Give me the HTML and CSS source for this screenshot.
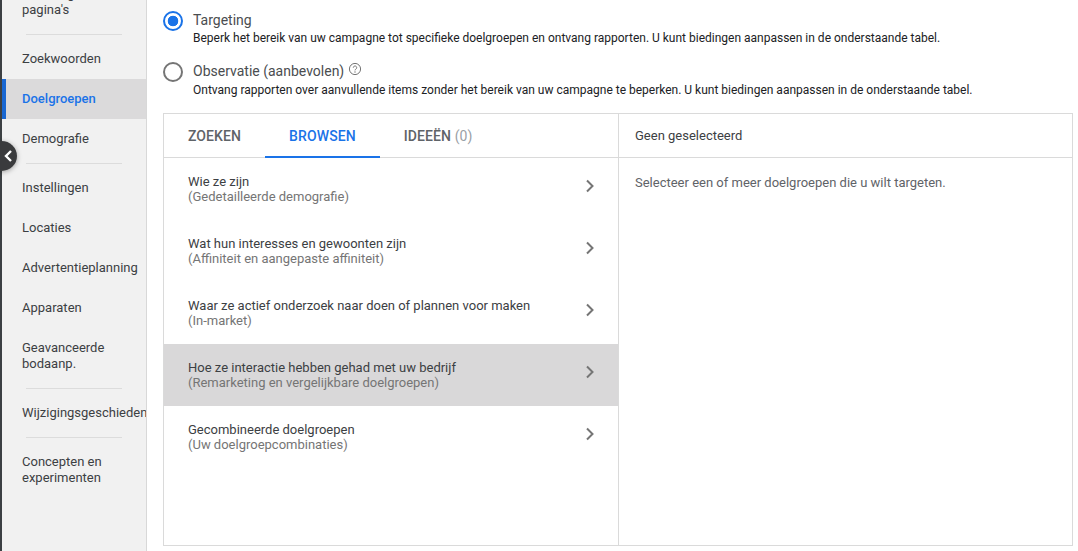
FILE: index.html
```html
<!DOCTYPE html>
<html lang="nl">
<head>
  <title>Doelgroepen</title>
  <meta charset="UTF-8">
  <meta name="viewport" content="width=device-width, initial-scale=1">
  <link rel="stylesheet" href="styles.css">
</head>
<body>
  <nav class="sidebar">
    <a class="nav-item nav-first">Instellingen voor<br>pagina's</a>
    <hr class="nav-line">
    <a class="nav-item">Zoekwoorden</a>
    <a class="nav-item active">Doelgroepen</a>
    <a class="nav-item">Demografie</a>
    <hr class="nav-line">
    <a class="nav-item">Instellingen</a>
    <a class="nav-item">Locaties</a>
    <a class="nav-item">Advertentieplanning</a>
    <a class="nav-item">Apparaten</a>
    <a class="nav-item">Geavanceerde<br>bodaanp.</a>
    <hr class="nav-line">
    <a class="nav-item">Wijzigingsgeschiedenis</a>
    <hr class="nav-line">
    <a class="nav-item">Concepten en<br>experimenten</a>
  </nav>

  <button class="collapse" aria-label="Inklappen">
    <svg width="10" height="14" viewBox="0 0 10 14"><path d="M8 2 L3 7 L8 12" fill="none" stroke="#fff" stroke-width="2.4"/></svg>
  </button>

  <main class="content">
    <div class="option">
      <span class="radio checked"></span>
      <div>
        <div class="option-title">Targeting</div>
        <div class="option-desc">Beperk het bereik van uw campagne tot specifieke doelgroepen en ontvang rapporten. U kunt biedingen aanpassen in de onderstaande tabel.</div>
      </div>
    </div>
    <div class="option option-second">
      <span class="radio"></span>
      <div>
        <div class="option-title">Observatie (aanbevolen)
          <svg class="help" width="14" height="14" viewBox="0 0 14 14"><circle cx="7" cy="7" r="5.6" fill="none" stroke="#757575" stroke-width="1"/><path d="M5.3 5.7a1.7 1.7 0 1 1 2.6 1.4c-.6.4-.9.7-.9 1.3" fill="none" stroke="#757575" stroke-width="1"/><circle cx="7" cy="10" r=".7" fill="#757575"/></svg>
        </div>
        <div class="option-desc option-desc-second">Ontvang rapporten over aanvullende items zonder het bereik van uw campagne te beperken. U kunt biedingen aanpassen in de onderstaande tabel.</div>
      </div>
    </div>

    <section class="picker">
      <div class="picker-left">
        <div class="tabs">
          <span class="tab">ZOEKEN</span>
          <span class="tab tab-active">BROWSEN</span>
          <span class="tab">IDEEËN <span class="count">(0)</span></span>
        </div>
        <ul class="rows">
          <li class="row">
            <div><div class="row-title">Wie ze zijn</div><div class="row-sub">(Gedetailleerde demografie)</div></div>
            <svg class="chevron" width="10" height="14" viewBox="0 0 10 14"><path d="M2 1.5 L7.5 7 L2 12.5"/></svg>
          </li>
          <li class="row">
            <div><div class="row-title">Wat hun interesses en gewoonten zijn</div><div class="row-sub">(Affiniteit en aangepaste affiniteit)</div></div>
            <svg class="chevron" width="10" height="14" viewBox="0 0 10 14"><path d="M2 1.5 L7.5 7 L2 12.5"/></svg>
          </li>
          <li class="row">
            <div><div class="row-title">Waar ze actief onderzoek naar doen of plannen voor maken</div><div class="row-sub">(In-market)</div></div>
            <svg class="chevron" width="10" height="14" viewBox="0 0 10 14"><path d="M2 1.5 L7.5 7 L2 12.5"/></svg>
          </li>
          <li class="row row-hover">
            <div><div class="row-title">Hoe ze interactie hebben gehad met uw bedrijf</div><div class="row-sub">(Remarketing en vergelijkbare doelgroepen)</div></div>
            <svg class="chevron" width="10" height="14" viewBox="0 0 10 14"><path d="M2 1.5 L7.5 7 L2 12.5"/></svg>
          </li>
          <li class="row">
            <div><div class="row-title">Gecombineerde doelgroepen</div><div class="row-sub">(Uw doelgroepcombinaties)</div></div>
            <svg class="chevron" width="10" height="14" viewBox="0 0 10 14"><path d="M2 1.5 L7.5 7 L2 12.5"/></svg>
          </li>
        </ul>
      </div>
      <div class="picker-right">
        <div class="selected-head">Geen geselecteerd</div>
        <p class="selected-empty">Selecteer een of meer doelgroepen die u wilt targeten.</p>
      </div>
    </section>
  </main>
</body>
</html>
```

FILE: styles.css
```css
html, body {
  height: 100%;
}

body {
  margin: 0;
  display: flex;
  height: 551px;
  overflow: hidden;
  background: #fff;
  border-left: 2px solid #3c4043;
  box-sizing: border-box;
  font-family: Roboto, sans-serif;
  color: #3c4043;
}

.sidebar {
  width: 144px;
  flex: none;
  box-sizing: content-box;
  margin-top: -26px;
  height: 577px;
  background: #f1f1f1;
  border-right: 1px solid #d8d8d8;
  overflow: hidden;
  font-size: 13px;
  line-height: 16px;
}

.nav-item {
  display: block;
  padding: 12px 0 12px 20px;
  white-space: nowrap;
  color: #3c4043;
}

.nav-item.active {
  background: #dbdadb;
  color: #1a73e8;
  font-weight: 500;
  border-left: 4px solid #1967d2;
  padding-left: 16px;
}

.nav-line {
  border: none;
  border-top: 1px solid #dcdcdc;
  margin: 4px 24px 4px;
}

.collapse {
  position: absolute;
  left: -14px;
  top: 141px;
  width: 31px;
  height: 30px;
  padding: 0 0 0 12px;
  border: none;
  border-radius: 50%;
  background: #3a3b3d;
  box-shadow: 0 1px 5px rgba(0,0,0,0.35);
  display: flex;
  align-items: center;
  justify-content: center;
}

.content {
  flex: 1;
  padding: 10px 5px 0 16px;
  min-width: 0;
}

.option {
  display: flex;
  gap: 10px;
}

.option-second {
  margin-top: 15px;
}

.radio {
  width: 20px;
  height: 20px;
  box-sizing: border-box;
  flex: none;
  border: 2px solid #757575;
  border-radius: 50%;
  margin-top: 1px;
}

.radio.checked {
  border-color: #1a73e8;
  background: radial-gradient(circle, #1a73e8 5px, #fff 5.6px);
}

.option-title {
  font-size: 14px;
  line-height: 20px;
  color: #4a4d50;
}

.help {
  vertical-align: 0;
}

.option-desc {
  font-size: 12px;
  line-height: 16px;
  color: #202124;
  white-space: nowrap;
}

.option-desc-second {
  margin-top: 1px;
}

.picker {
  display: flex;
  margin-top: 15px;
  height: 433px;
  box-sizing: border-box;
  border: 1px solid #dadada;
  background: #fff;
}

.picker-left {
  width: 454px;
  flex: none;
  border-right: 1px solid #dadada;
}

.tabs {
  display: flex;
  height: 44px;
  box-sizing: border-box;
  border-bottom: 1px solid #dadada;
}

.tab {
  padding: 0 24px;
  height: 44px;
  box-sizing: border-box;
  font-size: 14px;
  font-weight: 500;
  letter-spacing: 0.1px;
  line-height: 45px;
  color: #5f6368;
}

.tab-active {
  color: #1a73e8;
  border-bottom: 2px solid #1a73e8;
}

.count {
  color: #9aa0a6;
  font-weight: 400;
}

.rows {
  list-style: none;
  margin: 0;
  padding: 0;
}

.row {
  display: flex;
  align-items: center;
  justify-content: space-between;
  height: 62px;
  box-sizing: border-box;
  padding: 0 23px 0 24px;
}

.row-hover {
  background: #d9d8d9;
}

.row-title {
  font-size: 13px;
  line-height: 15px;
  color: #3c4043;
}

.row-sub {
  font-size: 13px;
  line-height: 15px;
  color: #757575;
}

.chevron {
  margin-top: -6px;
}

.chevron path {
  fill: none;
  stroke: #757575;
  stroke-width: 2;
}

.picker-right {
  flex: 1;
}

.selected-head {
  height: 44px;
  box-sizing: border-box;
  padding-left: 16px;
  border-bottom: 1px solid #dadada;
  font-size: 13px;
  line-height: 44px;
  color: #3c4043;
}

.selected-empty {
  margin: 17px 0 0;
  padding-left: 16px;
  font-size: 13px;
  line-height: 16px;
  color: #5f6368;
}
```
